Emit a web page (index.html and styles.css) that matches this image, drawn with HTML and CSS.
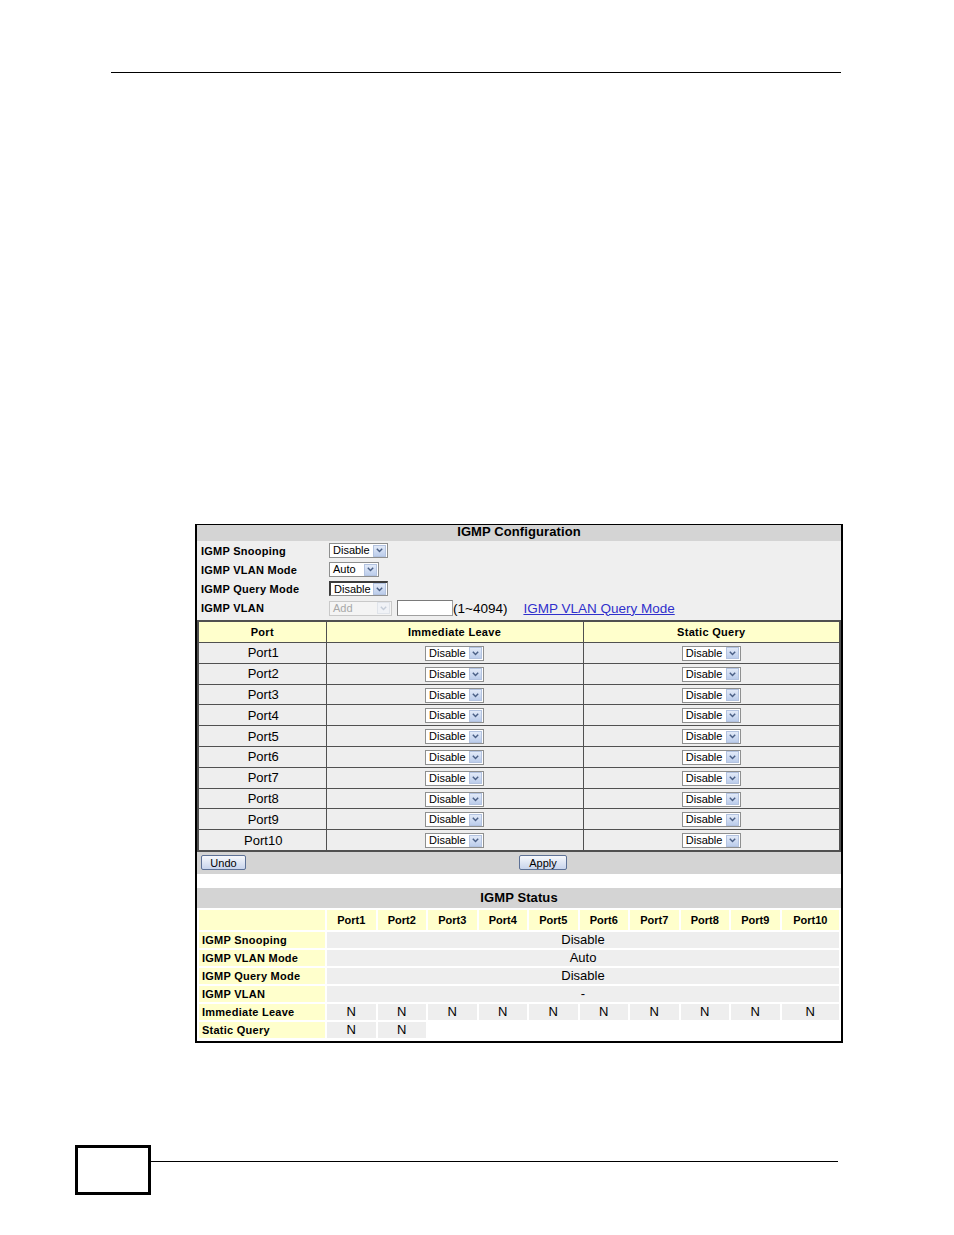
FILE: index.html
```html
<!DOCTYPE html>
<html>
<head>
<meta charset="utf-8">
<title>IGMP Configuration</title>
<link rel="stylesheet" href="styles.css">
</head>
<body>
<div class="page">
  <div class="topline"></div>

  <div class="figure">
    <div class="bar">IGMP Configuration</div>
    <div class="config">
      <div class="crow">
        <span class="clabel">IGMP Snooping</span>
        <span class="sel w59"><span class="sv">Disable</span><span class="arr"><svg width="7" height="5" viewBox="0 0 7 5"><path d="M0.8 0.8 L3.5 3.6 L6.2 0.8" fill="none" stroke="#4a5f85" stroke-width="1.4"/></svg></span></span>
      </div>
      <div class="crow">
        <span class="clabel">IGMP VLAN Mode</span>
        <span class="sel w50"><span class="sv">Auto</span><span class="arr"><svg width="7" height="5" viewBox="0 0 7 5"><path d="M0.8 0.8 L3.5 3.6 L6.2 0.8" fill="none" stroke="#4a5f85" stroke-width="1.4"/></svg></span></span>
      </div>
      <div class="crow">
        <span class="clabel">IGMP Query Mode</span>
        <span class="sel w59 focus"><span class="sv">Disable</span><span class="arr"><svg width="7" height="5" viewBox="0 0 7 5"><path d="M0.8 0.8 L3.5 3.6 L6.2 0.8" fill="none" stroke="#4a5f85" stroke-width="1.4"/></svg></span></span>
      </div>
      <div class="crow last">
        <span class="clabel">IGMP VLAN</span>
        <span class="sel w63 disabled"><span class="sv">Add</span><span class="arr"><svg width="7" height="5" viewBox="0 0 7 5"><path d="M0.8 0.8 L3.5 3.6 L6.2 0.8" fill="none" stroke="#c4ccd8" stroke-width="1.4"/></svg></span></span>
        <span class="vinput"></span>
        <span class="range">(1~4094)</span>
        <a class="qlink" href="#">IGMP VLAN Query Mode</a>
      </div>

      <table class="ports">
        <colgroup><col class="c1"><col class="c2"><col class="c3"></colgroup>
        <thead>
          <tr><th>Port</th><th>Immediate Leave</th><th>Static Query</th></tr>
        </thead>
        <tbody id="portrows"></tbody>
      </table>
    </div>

    <div class="buttons">
      <div class="bcell"><span class="btn undo">Undo</span></div>
      <div class="bcell"><span class="btn apply">Apply</span></div>
    </div>

    <div class="gap"></div>

    <div class="bar sbar">IGMP Status</div>
    <table class="status">
      <colgroup>
        <col class="s0"><col class="sp"><col class="sp"><col class="sp"><col class="sp"><col class="sp"><col class="sp"><col class="sp"><col class="sp"><col class="sp"><col class="sl">
      </colgroup>
      <tr class="shead">
        <td class="lab"></td>
        <td>Port1</td><td>Port2</td><td>Port3</td><td>Port4</td><td>Port5</td><td>Port6</td><td>Port7</td><td>Port8</td><td>Port9</td><td>Port10</td>
      </tr>
      <tr><td class="lab">IGMP Snooping</td><td class="d" colspan="10">Disable</td></tr>
      <tr><td class="lab">IGMP VLAN Mode</td><td class="d" colspan="10">Auto</td></tr>
      <tr><td class="lab">IGMP Query Mode</td><td class="d" colspan="10">Disable</td></tr>
      <tr><td class="lab">IGMP VLAN</td><td class="d" colspan="10">-</td></tr>
      <tr><td class="lab">Immediate Leave</td><td class="d">N</td><td class="d">N</td><td class="d">N</td><td class="d">N</td><td class="d">N</td><td class="d">N</td><td class="d">N</td><td class="d">N</td><td class="d">N</td><td class="d">N</td></tr>
      <tr><td class="lab">Static Query</td><td class="d">N</td><td class="d">N</td><td class="e" colspan="8"></td></tr>
    </table>
  </div>

  <div class="footer">
    <div class="pagebox"></div>
    <div class="footline"></div>
  </div>
</div>
<script src="script.js"></script>
</body>
</html>
```

FILE: script.js
```js
(function () {
  var body = document.getElementById('portrows');
  var sel = '<span class="sel w59"><span class="sv">Disable</span><span class="arr"><svg width="7" height="5" viewBox="0 0 7 5"><path d="M0.8 0.8 L3.5 3.6 L6.2 0.8" fill="none" stroke="#4a5f85" stroke-width="1.4"/></svg></span></span>';
  var html = '';
  for (var i = 1; i <= 10; i++) {
    html += '<tr><td class="pname">Port' + i + '</td><td>' + sel + '</td><td>' + sel + '</td></tr>';
  }
  body.innerHTML = html;
})();
```

FILE: styles.css
```css
html, body {
  margin: 0;
  padding: 0;
  background: #ffffff;
}

.page {
  width: 954px;
  height: 1235px;
  font-family: "Liberation Sans", Arial, sans-serif;
  color: #000;
  overflow: hidden;
}

.topline {
  margin-left: 111px;
  width: 730px;
  height: 72px;
  border-bottom: 1px solid #000;
}

.figure {
  margin-top: 451px;
  margin-left: 195px;
  width: 648px;
  box-sizing: border-box;
  border: 2px solid #000;
  border-top-width: 1px;
  padding-bottom: 1px;
}

.bar {
  height: 16px;
  line-height: 14px;
  background: #d4d4d4;
  text-align: center;
  font-weight: bold;
  font-size: 13px;
  letter-spacing: 0.1px;
}

.config {
  background: #efefef;
}

.crow {
  height: 19px;
  display: flex;
  align-items: center;
  padding-left: 4px;
}

.crow.last {
  height: 20px;
  margin-bottom: 2px;
}

.clabel {
  width: 128px;
  flex: none;
  font-weight: bold;
  font-size: 11px;
  letter-spacing: 0.25px;
}

.sel {
  display: inline-flex;
  align-items: center;
  justify-content: space-between;
  box-sizing: border-box;
  height: 15px;
  border: 1px solid #8e8f8f;
  background: #fff;
  font-size: 11px;
  padding-left: 3px;
  padding-right: 1px;
  vertical-align: middle;
  flex: none;
}

.sel.w59 { width: 59px; }
.sel.w50 { width: 50px; }
.sel.w63 { width: 63px; }

.sel.focus {
  border-top: 2px solid #3c3c3c;
  border-left: 2px solid #3c3c3c;
}

.sel .sv {
  line-height: 13px;
}

.sel .arr {
  width: 13px;
  height: 12px;
  box-sizing: border-box;
  border: 1px solid #b3c3e0;
  background: linear-gradient(#e2eaf8, #bccdeb);
  display: flex;
  align-items: center;
  justify-content: center;
}

.sel.disabled {
  background: #f4f4f4;
  border-color: #c9c9c9;
  color: #a8a8a8;
}

.sel.disabled .arr {
  background: #f0f2f6;
  border-color: #e0e4ea;
}

.vinput {
  display: inline-block;
  width: 56px;
  height: 16px;
  box-sizing: border-box;
  margin-left: 5px;
  background: #fff;
  border: 1px solid #a0a0a0;
  border-top-color: #7a7a7a;
  border-left-color: #7a7a7a;
  flex: none;
}

.range {
  font-size: 13.5px;
  margin-left: 0;
}

.qlink {
  margin-left: 16px;
  font-size: 13.5px;
  color: #3030cc;
  text-decoration: underline;
}

table.ports {
  width: 644px;
  border-collapse: collapse;
  table-layout: fixed;
  border: 2px solid #505050;
}

.ports col.c1 { width: 128px; }
.ports col.c2 { width: 257px; }

.ports th, .ports td {
  border: 1px solid #505050;
  padding: 0;
  text-align: center;
}

.ports th {
  height: 20px;
  background: #ffffcc;
  font-size: 11px;
  letter-spacing: 0.3px;
  font-weight: bold;
}

.ports td {
  height: 19.8px;
  background: #eeeeee;
  font-size: 13px;
}

.ports td.pname {
  padding-left: 2px;
}

.buttons {
  height: 22px;
  background: #d4d4d4;
  display: grid;
  grid-template-columns: 322px 1fr;
  align-items: center;
}

.bcell {
  display: flex;
  align-items: center;
}

.bcell:first-child {
  padding-left: 4px;
}

.btn {
  display: inline-flex;
  align-items: center;
  justify-content: center;
  box-sizing: border-box;
  height: 15px;
  border: 1px solid #5d7196;
  border-radius: 2px;
  background: linear-gradient(#f6f8fc, #c8d4ec);
  font-size: 11px;
}

.btn.undo { width: 45px; }
.btn.apply { width: 48px; }

.gap {
  height: 14px;
  background: #fff;
}

.bar.sbar {
  height: 20px;
  line-height: 20px;
}

table.status {
  width: 644px;
  border-collapse: separate;
  border-spacing: 2px;
  table-layout: fixed;
}

.status col.s0 { width: 126px; }
.status col.sp { width: 48.5px; }

.status td {
  padding: 0;
  height: 16px;
  text-align: center;
  font-size: 13px;
  line-height: 16px;
}

.status tr.shead td {
  height: 20px;
  background: #ffffcc;
  font-weight: bold;
  font-size: 11px;
}

.status td.lab {
  background: #ffffcc;
  text-align: left;
  padding-left: 3px;
  font-weight: bold;
  font-size: 11px;
  letter-spacing: 0.25px;
}

.status td.d {
  background: #eeeeee;
}

.status td.e {
  background: #fff;
}

.footer {
  margin-top: 102px;
  display: flex;
  align-items: flex-start;
}

.pagebox {
  margin-left: 75px;
  width: 76px;
  height: 50px;
  box-sizing: border-box;
  border: 3px solid #000;
  flex: none;
}

.footline {
  margin-top: 16px;
  width: 687px;
  border-top: 1px solid #000;
  flex: none;
}
```
